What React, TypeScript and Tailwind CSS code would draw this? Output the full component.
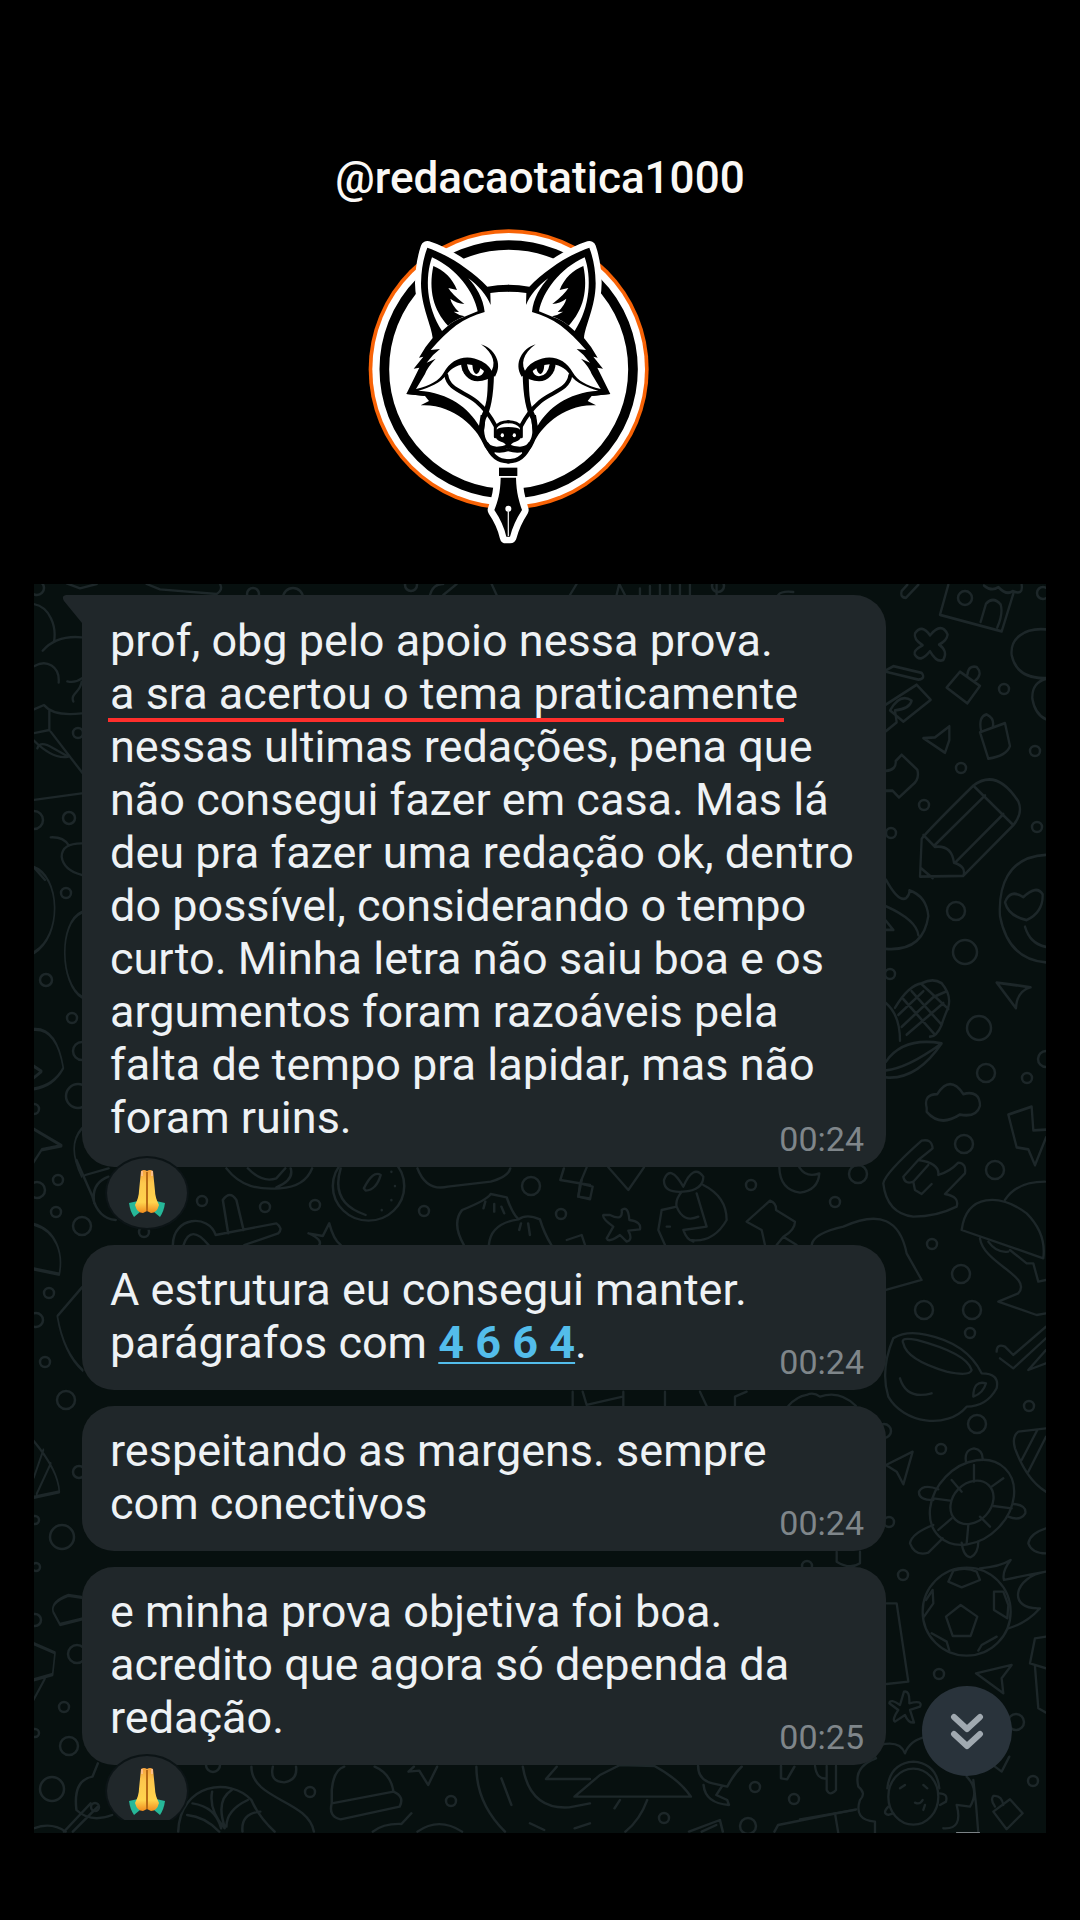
import React from "react";

function FoxHalf() {
  return (
    <g fill="#000">
      <path d="M352 323C400 338 480 385 532 440Q562 434 596 434V455Q565 455 541 459L542 495C530 465 505 437 475 415C498 440 520 475 524 516C460 533 415 568 362 630L390 627Q368 643 350 668L377 656Q352 682 345 702L318 747L345 768L289 762L328 683L311 686L340 650L327 653Q345 620 368 594C366 560 333 500 333 430Q334 370 352 323Z" />
      <path fill="#fff" d="M366 352C345 410 348 500 396 573L414 557Q430 542 463 530L503 514C492 455 440 385 366 352Z" />
      <path d="M370 378C400 390 428 415 441 450L415 444Q425 462 463 492Q440 490 421 476Q425 495 447 516L431 515Q445 525 464 529Q430 543 414 557C370 510 355 450 370 378Z" />
      <path d="M289 762L318 747C360 738 388 722 402 697C425 655 470 640 515 664Q540 677 550 703L538 716Q528 690 505 680C475 664 430 672 410 704C392 728 360 742 325 752C420 758 475 805 507 857L512 825L528 822L521 880Q525 915 556 932L550 947Q528 932 518 908C500 865 430 790 332 796L357 783L345 768Z" />
      <path d="M513 613C553 625 580 670 555 710L540 700C560 675 552 640 513 613Z" />
      <path d="M453 668C453 700 476 724 503 724Q532 723 552 706L535 684L500 666Z" />
      <path fill="#fff" d="M471 673Q477 708 503 709Q518 708 522 693L511 685Q506 703 498 702Q489 699 487 675Z" />
      <path d="M534 705C532 750 535 785 516 822L510 870L520 885L526 840Q550 800 552 703Z" />
      <g fill="none" stroke="#000" strokeWidth="12" strokeLinecap="round">
        <path d="M409 706C415 750 465 755 500 785Q535 815 556 857" />
        <path d="M517 840C513 885 520 925 560 926Q580 926 596 918" />
        <path d="M530 913Q550 965 596 964" strokeWidth="13" />
        <path d="M556 890V862Q570 844 596 845" strokeWidth="9" />
        <path d="M550 931Q570 937 596 929" strokeWidth="9" />
      </g>
      <path d="M596 861Q565 862 560 869L554 880Q555 900 573 905Q587 907 592 925H596Z" />
      <ellipse cx="577" cy="886" rx="5" ry="6" fill="#fff" />
    </g>
  );
}

function FoxLogo() {
  const nib = "M572 1013H618C619 1060 628 1085 636 1110Q610 1150 600 1190H589Q580 1150 553 1110C563 1085 571 1060 572 1013Z";
  return (
    <svg viewBox="174 261 846 960" className="h-[320px] w-[282px]" role="img" aria-label="Raposa com pena de caneta">
      <circle cx="596" cy="688" r="420" fill="#f86306" />
      <circle cx="596" cy="688" r="409" fill="#fff" />
      <circle cx="596" cy="688" r="373" fill="#fff" stroke="#000" strokeWidth="29" />
      <g fill="#fff" stroke="#fff" strokeWidth="40" strokeLinejoin="round">
        <path d="M352 323C400 338 480 385 532 440L524 516L368 594C366 560 335 500 335 430Q336 370 352 323Z" />
        <path d="M838 323C790 338 710 385 658 440L666 516L822 594C824 560 855 500 855 430Q854 370 838 323Z" />
        <path d={nib} />
      </g>
      <FoxHalf />
      <g transform="translate(1190 0) scale(-1 1)">
        <FoxHalf />
      </g>
      <rect x="567" y="983" width="55" height="25" />
      <path d={nib} />
      <circle cx="595" cy="1106" r="9" fill="#fff" />
      <path d="M595 1110V1188" stroke="#ddd" strokeWidth="4" />
    </svg>
  );
}

const rings: [number, number, number][] = [
  [37, 588, 7], [253, 594, 6], [293, 598, 10], [411, 585, 6], [718, 586, 6], [78, 733, 5], [34, 820, 9], [69, 818, 6],
  [66, 893, 5], [46, 980, 6], [72, 1018, 5], [82, 1051, 9], [78, 1096, 12], [34, 1109, 5], [37, 1190, 8],
  [58, 1180, 5], [56, 1212, 5], [82, 1226, 9], [49, 1293, 5], [36, 1320, 7], [45, 1362, 5], [66, 1400, 9], [79, 1472, 6],
  [35, 1520, 4], [62, 1537, 12], [36, 1567, 4], [35, 1620, 6], [77, 1654, 9], [64, 1707, 5], [35, 1733, 4], [69, 1746, 9],
  [52, 1789, 12], [202, 1201, 5], [265, 1207, 5], [315, 1205, 5], [424, 1211, 5], [531, 1186, 9], [561, 1214, 5],
  [144, 1232, 5], [751, 1185, 5], [835, 1202, 5], [858, 1174, 9], [964, 1144, 9], [995, 1170, 9], [932, 1244, 5],
  [961, 1274, 9], [924, 1310, 9], [972, 1310, 9], [970, 1333, 5], [1029, 1406, 5], [977, 1424, 9], [941, 1449, 5],
  [884, 1431, 7], [889, 1522, 5], [903, 1575, 5], [807, 1566, 5], [939, 1674, 5], [1016, 1722, 8], [1033, 1781, 5],
  [965, 598, 7], [1043, 593, 6], [1004, 689, 5], [1035, 751, 5], [961, 768, 5], [924, 805, 5], [891, 833, 5], [1037, 827, 5],
  [956, 911, 9], [965, 952, 12], [890, 974, 5], [979, 1028, 12], [986, 1073, 9], [1027, 1078, 5], [1046, 1059, 8],
  [310, 1792, 5], [213, 1765, 7], [451, 1801, 5], [755, 1787, 5], [794, 1799, 5], [664, 1818, 5], [95, 1807, 4], [748, 1826, 8],
];

function Wallpaper() {
  return (
    <svg
      viewBox="34 584 1012 1249"
      preserveAspectRatio="xMidYMin slice"
      className="absolute inset-0 h-full w-full"
      aria-hidden="true"
      fill="none"
      stroke="#1d2729"
      strokeWidth="2.5"
      strokeLinecap="round"
      strokeLinejoin="round"
    >
      {rings.map(([x, y, r]) => (
        <circle key={`${x}-${y}`} cx={x} cy={y} r={r} />
      ))}
      {/* top left: clouds and flower */}
      <g transform="translate(30 580) scale(.3333)" strokeWidth="7">
        <path d="M10 72C60 80 80 140 72 185M38 212Q80 165 155 172M10 260C50 235 90 260 86 308M112 304Q135 310 155 295M155 305C150 340 120 340 130 365M12 388L42 375Q70 410 155 400M58 390V450L10 460M62 455L158 580M10 480Q70 540 115 530L70 505Q30 480 22 505M10 660L155 640M62 772Q100 770 115 795M155 790Q95 790 95 830Q100 870 155 885M10 860L45 900" />
        <path d="M110 10L150 25L200 12M350 12L390 28L560 42Q580 30 570 12M1200 45Q1210 10 1240 12M1240 45L1280 12M1385 12L1400 45M1620 45L1640 12M1760 45L1768 12L1785 45M1830 45V25M1860 45V18M1890 45V14M1920 45V12M1950 45V12M1980 45V12M2060 45V12M2245 45Q2255 32 2290 36" />
      </g>
      {/* left edge: planet, shells, leaves */}
      <g transform="translate(30 740) scale(.3333 .6762)" strokeWidth="5">
        <path d="M10 188C90 200 100 290 10 315M155 255C85 270 90 360 155 380M10 428Q80 425 100 485Q70 512 10 516M10 482L35 490L10 500M10 575L95 600L35 606L10 625M155 575Q110 600 155 645M10 716C80 725 100 760 88 790L10 782M155 810L82 852C95 890 120 915 158 932M10 1036Q85 1080 88 1112L10 1120M40 1050L12 1090M62 1070L20 1115M155 1268L115 1265Q60 1275 70 1290L90 1308L155 1300M10 1336L75 1350L68 1382L10 1390M10 1420L45 1388" />
      </g>
      {/* right column: house, cross, bags, pencil, corn, hand */}
      <g transform="translate(880 580) scale(.3333 .3954)" strokeWidth="7">
        <path d="M205 12L180 88L365 130L400 35M312 14Q335 30 355 18Q380 40 398 28Q430 40 425 12M302 106L318 60Q340 40 362 62Q370 85 352 120M65 28Q60 45 78 45L115 12M65 28L82 12" />
        <path d="M105 135Q125 110 150 140Q185 105 203 138Q200 155 177 163Q205 180 190 202Q170 210 150 180Q120 212 104 188Q100 178 128 165Q100 150 105 135ZM18 228L40 218L125 235Q138 250 115 252L18 232M18 315L110 265L152 303L70 358L30 330Q60 285 95 305Q90 325 45 330L50 360L18 382" />
        <path d="M240 232L300 268L262 312L200 272ZM262 240Q265 215 290 220Q310 238 285 255M300 385L375 362L390 420Q380 445 325 452ZM303 380Q295 345 320 340Q345 350 338 372M130 400L165 398L208 370V405L195 437ZM18 483Q50 480 47 458L65 442L112 480Q120 505 95 520L57 550L38 533H18" />
        <path d="M120 750L125 655Q130 645 280 520Q350 475 415 560Q430 590 400 620L250 748ZM280 520L400 620M315 545L165 670M370 592L225 715M130 645L165 675Q215 670 222 715Q260 725 250 748M122 728L158 754" />
        <path d="M498 125C430 120 390 150 395 190Q410 250 498 248M498 250Q455 260 457 300Q465 340 498 352M498 695C380 700 355 780 360 850Q385 960 498 967M430 802Q390 780 375 815Q385 850 440 860Q490 840 488 795Q470 770 430 802M435 877Q450 920 498 928" />
        <path d="M18 758Q55 815 78 805Q90 795 88 785Q140 800 145 850Q130 940 18 933M18 825Q110 860 115 898M18 862L40 885H18M18 1070Q60 1100 60 1165M45 1082Q85 1025 125 1020Q160 1005 185 1020Q215 1050 205 1080Q190 1110 185 1125Q170 1155 150 1155M70 1060L165 1150M95 1040L185 1125M125 1022L205 1085M55 1100L130 1040M65 1130L160 1055L200 1040M80 1150L190 1070M18 1218Q70 1155 185 1172Q110 1265 18 1258M18 1240Q80 1235 180 1175M350 1018L452 1030Q410 1040 408 1083ZM140 1335Q130 1300 172 1300Q210 1250 250 1300Q300 1290 300 1330Q290 1360 240 1352Q180 1385 140 1345ZM385 1352L455 1332L460 1392L498 1390M385 1352L410 1435L445 1440L465 1480L498 1410" />
      </g>
      {/* gap beneath the first message */}
      <g transform="translate(30 1100) scale(.3571 .3333)" strokeWidth="7">
        <path d="M175 290Q190 355 240 360M155 225L220 205M220 230Q170 250 180 310M130 180L175 290M550 205C590 260 640 270 700 265Q770 260 790 205M610 205Q650 250 690 235L715 205M730 205Q740 240 690 262M400 435C400 350 500 340 520 405L690 370Q710 385 695 400L600 435M430 435Q450 370 500 435M555 400L540 300Q560 270 578 300L598 390" />
        <ellipse cx="948" cy="258" rx="100" ry="104" />
        <path d="M870 205Q840 310 940 345M935 265Q960 210 982 225Q970 270 940 272ZM1012 215V216M1022 258V259M1012 300V301M985 330V331M1085 205Q1110 275 1170 260L1290 245Q1340 230 1345 205M780 400L820 408L838 370Q850 420 870 435M780 400Q820 420 810 435M1215 435Q1180 370 1210 330Q1280 300 1290 282L1335 292Q1350 340 1368 358Q1290 370 1285 435M1368 358Q1390 340 1428 358Q1440 400 1460 435M1275 305L1270 325M1300 312V335M1320 320L1328 340M1375 370L1370 390M1395 370L1400 405M1495 205L1485 240L1568 255M1545 240L1535 290L1568 295" />
      </g>
      <g transform="translate(560 1130) scale(.3333)" strokeWidth="7">
        <path d="M60 160L80 112M60 160L55 200L90 208L98 170L60 160M145 112L205 180L252 112M150 255Q190 275 185 240Q205 225 208 270Q245 275 240 298L205 302Q220 330 200 335L180 315Q145 340 140 325L160 290Q125 265 130 255ZM20 330L65 315L75 345M370 185Q310 190 312 150Q330 100 370 170Q400 100 430 140Q430 180 370 185M365 185Q345 210 350 230Q370 280 415 260M350 230L305 240L295 300L315 345M320 290H330M410 190L440 290L370 300Q380 330 400 335M430 165Q500 200 500 270Q460 340 390 330M658 112Q660 180 720 188Q775 180 778 130Q740 145 718 112M615 345L605 300L560 275L630 212Q650 220 648 240L705 275Q705 300 670 320L710 345M670 320L650 345" />
        <path d="M755 345Q760 310 850 290C960 240 1020 270 1040 370L1085 450L978 480M970 160Q975 130 1085 32Q1115 25 1118 55L1075 90Q1140 100 1135 135Q1170 125 1195 98Q1220 100 1215 130L1155 192Q1200 200 1190 230Q1130 260 1060 260Q980 250 970 160M1075 90L1030 140Q1035 165 1060 155M1105 105L1060 155L1065 180L1085 192L1115 162" />
        <path d="M1205 300C1220 190 1320 190 1400 250Q1460 310 1450 385ZM1335 210Q1370 155 1455 155M1260 325C1270 400 1420 440 1375 490L1315 515L1430 555L1458 550M1285 335Q1310 370 1345 365M1350 360L1400 400L1420 400L1435 455L1458 450M1000 625Q1040 600 1100 615Q1220 640 1265 730Q1320 730 1310 775Q1280 830 1220 830C1160 900 1030 880 985 800Q960 720 1000 625ZM1030 640Q1020 620 1070 630Q1220 670 1235 720Q1230 740 1160 725Q1040 690 1030 640ZM1020 745Q1040 810 1115 790M1240 800Q1240 750 1278 760Q1270 790 1240 800ZM1310 665Q1310 640 1335 650L1360 675L1458 590M1320 685L1360 715L1458 625M1405 720L1458 660M1405 720L1458 700" />
        <path d="M38 828V785M68 785L80 825L188 800M190 828V785M315 828V785M420 785L440 828M525 828V800L560 785M685 828Q710 800 740 795Q760 785 780 800Q840 780 888 828" />
      </g>
      {/* turtle, burning football, asterisk, face */}
      <g transform="translate(800 1380) scale(.3333)" strokeWidth="7">
        <ellipse cx="516" cy="367" rx="110" ry="142" transform="rotate(44 516 367)" />
        <ellipse cx="516" cy="367" rx="57" ry="72" transform="rotate(44 516 367)" />
        <path d="M498 245Q492 210 522 205Q550 210 548 240M400 360Q355 360 357 335Q370 310 415 328M640 372Q680 375 676 400Q660 425 625 410M485 488Q490 530 512 532Q535 520 535 485M400 435Q335 460 330 490Q345 530 385 518L428 475M522 255V305M610 295L575 320M635 385L580 378M570 440L540 410M500 490L505 435M415 450L455 415M400 355L450 362M455 300L485 335M258 255L338 215L310 313L290 275ZM738 145L655 155Q635 170 645 205Q680 300 738 335M712 150L665 240M738 170L685 275M738 445Q690 460 685 490Q695 520 738 520" />
        <circle cx="500" cy="695" r="132" />
        <path d="M438 710L482 675L532 710L512 768H458ZM445 605L460 572Q500 560 530 575L540 600L485 622ZM582 635H610L625 675L622 715L582 690ZM372 710L400 670L398 630L378 660M395 760L440 785L448 812M535 812L545 795L590 770M540 565Q600 560 632 540Q605 575 612 600Q680 585 738 575M738 575C640 590 620 690 720 685Q680 730 625 745M260 670H290L325 905L260 912M110 515V545Q150 570 180 550V515M738 770L705 775L690 850L738 865M705 860L715 985L738 998M528 880L635 855L605 895L610 940ZM300 975L312 935Q330 930 328 970Q370 960 360 980L330 990L342 1028Q325 1030 315 1005L285 1025Q275 1020 295 990L268 970Q270 955 300 975Z" />
        <path d="M240 1095Q300 1080 315 1120Q330 1080 380 1070M240 1095Q215 1120 228 1135Q160 1160 175 1220Q200 1240 180 1260Q160 1320 225 1325V1360M520 1200Q530 1280 535 1360M500 1190Q540 1230 510 1280L470 1275Q490 1350 430 1345M585 1280Q570 1260 580 1248Q605 1245 610 1275M580 1295L630 1258L668 1300L620 1348ZM585 1160L605 1175L628 1130M418 1240Q445 1240 438 1265L420 1275M265 1280Q245 1300 265 1305L280 1300M345 1268Q360 1275 368 1260M300 1225L315 1215M370 1215L382 1225M375 1275L370 1290" />
        <ellipse cx="340" cy="1250" rx="75" ry="84" />
        <path d="M262 1225Q270 1150 340 1145Q410 1150 418 1225M80 1158V1230Q90 1250 108 1230V1158M45 1158Q50 1200 80 1195M0 1318L165 1290M105 1300L115 1360" />
      </g>
      {/* bottom strip: croissant, hat, globe, sailboat */}
      <g transform="translate(30 1700) scale(.3571 .3333)" strokeWidth="7">
        <path d="M190 190L175 230Q120 240 130 330Q170 370 230 345M170 310L95 395M190 320L120 395M10 385Q60 365 100 395M415 395C420 250 560 230 620 300Q640 350 685 395M440 345Q490 350 530 395M455 310Q520 320 535 385M510 275Q500 330 545 385M565 270Q520 300 545 380M610 300Q550 330 550 380M645 335Q590 340 595 395M620 200C620 300 780 300 795 395M680 200Q670 245 712 247Q750 240 745 200M845 310V270Q850 210 880 200M965 200Q1010 220 1018 275M845 310L1018 275Q1050 290 1035 320L870 358Q835 350 845 310ZM960 395Q990 370 1040 372L1068 340M1060 215L1090 212L1115 255L1140 200M1060 215L1075 200M1250 200Q1250 310 1330 395M1380 200Q1400 330 1510 322L1568 310M1320 235L1348 315M1475 200L1445 237H1568M1400 370L1440 390M1525 385L1568 370M1085 395Q1145 350 1210 395" />
      </g>
      <g transform="translate(480 1750) scale(.3635 .3333)" strokeWidth="7">
        <path d="M260 140L330 75L385 45L480 48Q550 90 580 140ZM460 150Q440 210 400 245M385 150L370 175M600 48Q600 90 640 100L680 110Q700 70 720 50M615 105Q620 160 685 165L680 150L650 135L665 110M575 245L660 210L668 245M610 245L650 225M828 48V85L845 88L865 50M810 245L820 225L1035 178" />
      </g>
    </svg>
  );
}

function PrayingHands() {
  return (
    <svg viewBox="0 0 36 48" className="h-12 w-9" role="img" aria-label="Mãos em oração">
      <defs>
        <linearGradient id="skin" x1="0" y1="0" x2="0" y2="1">
          <stop offset="0" stopColor="#f5a23c" />
          <stop offset="0.3" stopColor="#fdc84d" />
          <stop offset="0.75" stopColor="#ffd34d" />
          <stop offset="1" stopColor="#f08c1e" />
        </linearGradient>
      </defs>
      <path d="M0 34L9 32L11 43L5 48Q1 42 0 34Z" fill="#26b899" />
      <path d="M36 34L27 32L25 43L31 48Q35 42 36 34Z" fill="#26b899" />
      <path d="M12 2Q15 0 18 2Q21 0 24 2L26 22Q26 28 30 36Q28 44 22 44L18 42L14 44Q8 44 6 36Q10 28 10 22Z" fill="url(#skin)" />
      <path d="M18 3V42" stroke="#b86a16" strokeWidth="2" />
      <path d="M13 2V7M23 2V7" stroke="#ffc39c" strokeWidth="1.5" />
    </svg>
  );
}

function Reaction({ className = "" }: { className?: string }) {
  return (
    <button
      type="button"
      aria-label="Reação"
      className={`relative -mt-[9px] ml-[25px] flex h-[70px] w-20 items-center justify-center rounded-[50%] bg-[#20272a] shadow-[0_0_0_2px_#0c1416] ${className}`}
    >
      <PrayingHands />
    </button>
  );
}

function Bubble({ time, className, children }: { time: string; className: string; children: React.ReactNode }) {
  return (
    <article className={`relative rounded-[32px] bg-[#20272a] px-7 ${className}`}>
      <p className="text-[45px] leading-[53px] whitespace-nowrap text-[#eef2f5]">{children}</p>
      <time className="absolute right-[22px] bottom-2 text-[34px] leading-10 text-[#7f868a]">{time}</time>
    </article>
  );
}

export default function App() {
  return (
    <main className="flex min-h-screen flex-col bg-black font-['Roboto',sans-serif]">
      <header className="flex flex-col items-center pt-[151px]">
        <h1 className="text-[44px] leading-[54px] font-medium text-[#faf8f5]">@redacaotatica1000</h1>
        <div className="mt-[22px] pr-[62px]">
          <FoxLogo />
        </div>
      </header>

      <section className="relative mx-[34px] mt-[37px] overflow-hidden bg-[#07100f] pt-[11px] pr-40 pb-3 pl-12">
        <Wallpaper />
        <div className="relative">
          <svg viewBox="0 0 22 30" className="absolute top-0 -left-5 h-[30px] w-[22px]" fill="#20272a" aria-hidden="true">
            <path d="M22 0H4Q-1 1 2 6L20 28V30H22Z" />
          </svg>
          <Bubble time="00:24" className="rounded-tl-none pt-[19px] pb-[23px]">
            prof, obg pelo apoio nessa prova.
            <br />
            <span className="relative inline-block">
              a sra acertou o tema praticamente
              <span className="absolute -bottom-0.5 -left-0.5 h-1 w-[676px] bg-[#ff2f2c]" />
            </span>
            <br />
            nessas ultimas redações, pena que
            <br />
            não consegui fazer em casa. Mas lá
            <br />
            deu pra fazer uma redação ok, dentro
            <br />
            do possível, considerando o tempo
            <br />
            curto. Minha letra não saiu boa e os
            <br />
            argumentos foram razoáveis pela
            <br />
            falta de tempo pra lapidar, mas não
            <br />
            foram ruins.
          </Bubble>
          <Reaction />
          <Bubble time="00:24" className="mt-[17px] pt-[18px] pb-[21px]">
            A estrutura eu consegui manter.
            <br />
            parágrafos com{" "}
            <a href="tel:4664" className="font-bold text-[#53bdeb] underline decoration-2 underline-offset-4">
              4 6 6 4
            </a>
            .
          </Bubble>
          <Bubble time="00:24" className="mt-4 pt-[18px] pb-[21px]">
            respeitando as margens. sempre
            <br />
            com conectivos
          </Bubble>
          <Bubble time="00:25" className="mt-4 pt-[18px] pb-[21px]">
            e minha prova objetiva foi boa.
            <br />
            acredito que agora só dependa da
            <br />
            redação.
          </Bubble>
          <Reaction className="mb-[-5px] [clip-path:inset(-4px_-4px_6px_-4px)]" />
        </div>
        <button
          type="button"
          aria-label="Ir para o fim"
          className="absolute right-[34px] bottom-[57px] flex size-[90px] items-center justify-center rounded-full bg-[#29333b]"
        >
          <svg viewBox="0 0 34 38" className="h-[38px] w-[34px]" fill="none" stroke="#a0a9b0" strokeWidth="6" strokeLinecap="round" strokeLinejoin="round" aria-hidden="true">
            <path d="M4 5L17 17L30 5M4 22L17 34L30 22" />
          </svg>
        </button>
        <span className="absolute right-[66px] bottom-0 h-px w-6 rounded-full bg-[#7b8286]" />
      </section>
    </main>
  );
}
